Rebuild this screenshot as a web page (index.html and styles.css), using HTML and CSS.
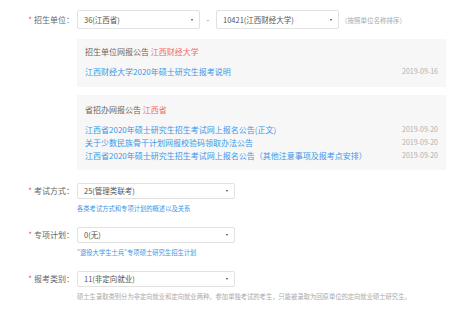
FILE: index.html
```html
<!DOCTYPE html>
<html lang="zh-CN">
<head>
    <meta charset="UTF-8">
    <meta name="viewport" content="width=device-width, initial-scale=1.0">
    <title>报考信息</title>
    <link rel="stylesheet" href="styles.css">
</head>
<body>

    <div class="form">
        <div class="row row-unit">
            <label class="label"><em>*</em>招生单位：</label>
            <div class="select select-sm">
                <span>36(江西省)</span>
                <i class="arrow"></i>
            </div>
            <span class="dash">-</span>
            <div class="select select-sm">
                <span>10421(江西财经大学)</span>
                <i class="arrow"></i>
            </div>
            <span class="tip">（按照单位名称排序）</span>
        </div>

        <div class="panel panel-school">
            <div class="panel-title">招生单位网报公告 <span class="red">江西财经大学</span></div>
            <ul class="notices">
                <li><a href="#">江西财经大学2020年硕士研究生报考说明</a><span class="date">2019-09-16</span></li>
            </ul>
        </div>

        <div class="panel panel-province">
            <div class="panel-title">省招办网报公告 <span class="red">江西省</span></div>
            <ul class="notices">
                <li><a href="#">江西省2020年硕士研究生招生考试网上报名公告(正文)</a><span class="date">2019-09-20</span></li>
                <li><a href="#">关于少数民族骨干计划网报校验码领取办法公告</a><span class="date">2019-09-20</span></li>
                <li><a href="#">江西省2020年硕士研究生招生考试网上报名公告（其他注意事项及报考点安排）</a><span class="date">2019-09-20</span></li>
            </ul>
        </div>

        <div class="row row-exam">
            <label class="label"><em>*</em>考试方式：</label>
            <div class="field">
                <div class="select">
                    <span>25(管理类联考)</span>
                    <i class="arrow"></i>
                </div>
                <a class="help" href="#">各类考试方式和专项计划的概述以及关系</a>
            </div>
        </div>

        <div class="row">
            <label class="label"><em>*</em>专项计划：</label>
            <div class="field">
                <div class="select">
                    <span>0(无)</span>
                    <i class="arrow"></i>
                </div>
                <a class="help" href="#">"退役大学生士兵"专项硕士研究生招生计划</a>
            </div>
        </div>

        <div class="row">
            <label class="label"><em>*</em>报考类别：</label>
            <div class="field">
                <div class="select">
                    <span>11(非定向就业)</span>
                    <i class="arrow"></i>
                </div>
                <p class="note">硕士生录取类别分为非定向就业和定向就业两种。参加单独考试的考生，只能被录取为回原单位的定向就业硕士研究生。</p>
            </div>
        </div>
    </div>

</body>
</html>
```

FILE: styles.css
```css
body {
    margin: 0;
    padding: 0;
    background: white;
    font-family: "Noto Sans CJK SC", "Noto Sans", sans-serif;
    color: #666;
}

.form {
    padding-top: 10px;
}

.row {
    display: flex;
    align-items: flex-start;
    margin-top: 13px;
}

.row-unit {
    margin-top: 0;
    align-items: center;
}

.label {
    width: 74px;
    padding-right: 3px;
    text-align: right;
    font-size: 8px;
    line-height: 16px;
    color: #666;
}

.label em {
    font-style: normal;
    color: #ec5a4f;
    margin-right: 2px;
}

.select {
    position: relative;
    box-sizing: border-box;
    width: 158px;
    height: 16px;
    border: 1px solid #e2e2e2;
    border-radius: 2px;
    padding-left: 6px;
    font-size: 7.5px;
    line-height: 14px;
    color: #555;
}

.select-sm {
    width: 123px;
    height: 19px;
    line-height: 17px;
}

.arrow {
    position: absolute;
    right: 6px;
    top: 50%;
    margin-top: -1px;
    border-left: 1.5px solid transparent;
    border-right: 1.5px solid transparent;
    border-top: 2.5px solid #444;
}

.dash {
    width: 16px;
    text-align: center;
    font-size: 8px;
    color: #777;
}

.tip {
    margin-left: 2px;
    font-size: 6.5px;
    color: #aaa;
}

.panel {
    margin-left: 77px;
    width: 369px;
    box-sizing: border-box;
    background: #f7f7f7;
    padding: 8px 8px 9px;
}

.panel-school {
    margin-top: 10px;
}

.panel-province {
    margin-top: 8px;
    padding-top: 10px;
    padding-bottom: 8px;
}

.panel-title {
    font-size: 8px;
    line-height: 10px;
    color: #666;
    margin-bottom: 8px;
}

.red {
    color: #ee6a63;
}

.notices {
    list-style: none;
    margin: 0;
    padding: 0;
}

.notices li {
    display: flex;
    justify-content: space-between;
    line-height: 13px;
    font-size: 8px;
}

.notices a {
    color: #3a97e8;
    text-decoration: none;
    white-space: nowrap;
}

.date {
    font-size: 7px;
    color: #b0b0b0;
}

.field {
    display: flex;
    flex-direction: column;
    align-items: flex-start;
}

.help {
    margin-top: 5px;
    font-size: 6.3px;
    line-height: 10px;
    color: #3a97e8;
    text-decoration: none;
}

.note {
    margin: 5px 0 0;
    font-size: 6.3px;
    line-height: 10px;
    color: #aaa;
    white-space: nowrap;
}
```
